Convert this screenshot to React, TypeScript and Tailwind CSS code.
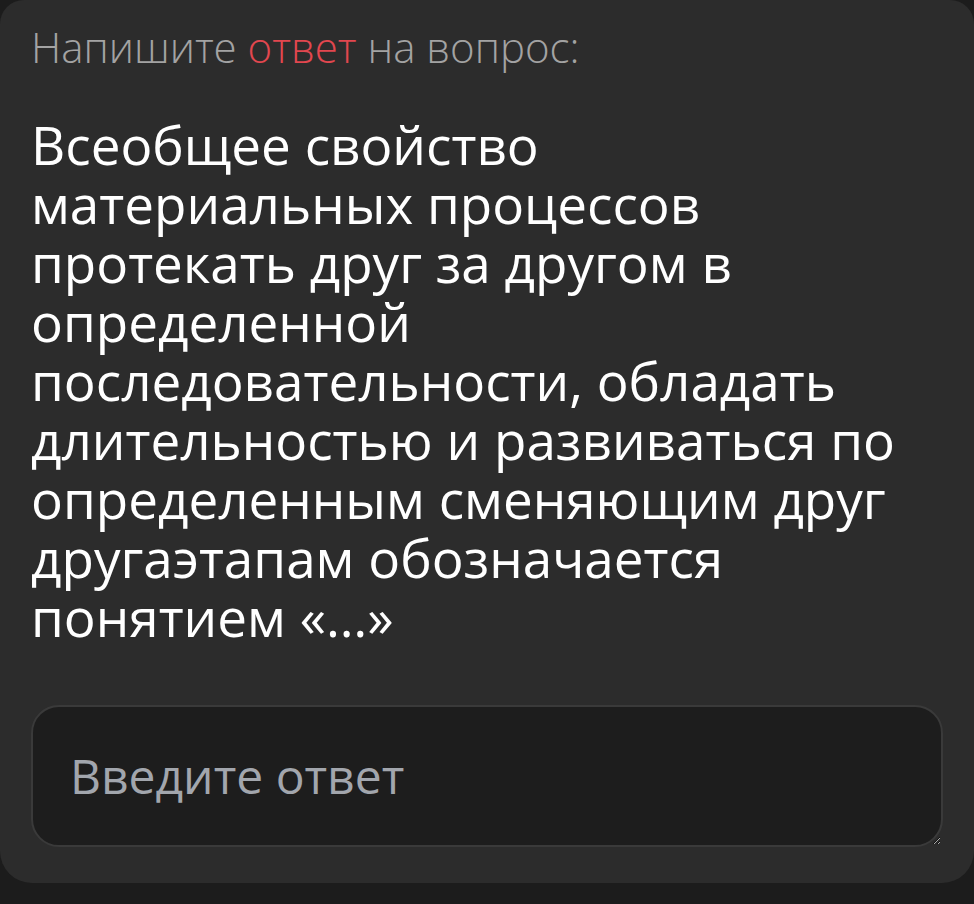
export default function App() {
  return (
    <div className="min-h-[904px] bg-[#1c1c1c]">
      <div className="rounded-b-[32px] rounded-t-[24px] bg-[#2c2c2c] px-[31px] pb-[36px] pt-[20px]">
        <p
          className="text-[42px] font-light leading-[54px] text-[#a3a3a3]"
          style={{ fontFamily: '"Open Sans", sans-serif' }}
        >
          Напишите <span className="text-[#e2474f]">ответ</span> на вопрос:
        </p>
        <p
          className="mt-[41px] text-[53px] leading-[59px] text-white"
          style={{ fontFamily: '"Open Sans", sans-serif' }}
        >
          Всеобщее свойство
          <br />
          материальных процессов
          <br />
          протекать друг за другом в
          <br />
          определенной
          <br />
          последовательности, обладать
          <br />
          длительностью и развиваться по
          <br />
          определенным сменяющим друг
          <br />
          другаэтапам обозначается
          <br />
          понятием «…»
        </p>
        <textarea
          placeholder="Введите ответ"
          className="mt-[59px] block h-[142px] w-full rounded-[28px] border-2 border-[#3a3a3a] bg-[#1d1d1d] px-[37px] py-[39px] text-[48px] leading-[60px] text-white placeholder:text-[#a2a6ad] outline-none"
          style={{ fontFamily: '"Open Sans", sans-serif' }}
        />
      </div>
    </div>
  )
}
